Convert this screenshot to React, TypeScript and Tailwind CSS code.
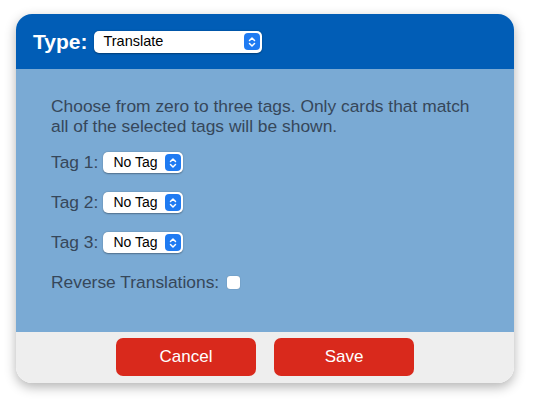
const Stepper = () => (
  <span className="flex h-[17px] w-[16px] items-center justify-center rounded-[4px] bg-[#1f7bf2]">
    <svg width="8" height="12" viewBox="0 0 8 12" fill="none" stroke="white" strokeWidth="1.5" strokeLinecap="round" strokeLinejoin="round">
      <path d="M1.5 4.5 L4 2 L6.5 4.5" />
      <path d="M1.5 7.5 L4 10 L6.5 7.5" />
    </svg>
  </span>
);

const FakeSelect = ({ value, className }: { value: string; className: string }) => (
  <div className={`flex items-center justify-between rounded-[5px] bg-white pl-[9px] pr-[2px] text-black shadow-[0_0.5px_1.5px_rgba(0,0,0,0.35)] ${className}`}>
    <span>{value}</span>
    <Stepper />
  </div>
);

export default function App() {
  const tags = ['Tag 1:', 'Tag 2:', 'Tag 3:'];
  return (
    <div className="h-[400px] w-[533px] bg-white pl-4 pt-[14px] font-['Liberation_Sans',Arial,sans-serif]">
      <div className="flex h-[369px] w-[498px] flex-col overflow-hidden rounded-[16px] shadow-[0_4px_12px_rgba(0,0,0,0.3)]">
        {/* Header */}
        <div className="flex h-[55px] items-center gap-[7px] bg-[#015db6] pl-[17px]">
          <span className="text-[21px] font-bold text-white">Type:</span>
          <FakeSelect value="Translate" className="h-[22px] w-[168px] text-[14.5px]" />
        </div>

        {/* Body */}
        <div className="flex flex-1 flex-col bg-[#7aaad4] px-[35px] pt-[27px] text-[17.4px] text-[#36475a]">
          <p className="leading-[20px]">
            Choose from zero to three tags. Only cards that match all of the selected tags will be shown.
          </p>
          <div className="mt-[16px] flex flex-col gap-[19px]">
            {tags.map((t) => (
              <div key={t} className="flex h-[21px] items-center gap-[5px]">
                <span>{t}</span>
                <FakeSelect value="No Tag" className="h-[21px] w-[80px] pl-[10px] text-[14px]" />
              </div>
            ))}
            <div className="flex h-[21px] items-center gap-[8px]">
              <span>Reverse Translations:</span>
              <span className="h-[13px] w-[13px] rounded-[3px] bg-white shadow-[0_0_1px_rgba(0,0,0,0.4)]" />
            </div>
          </div>
        </div>

        {/* Footer */}
        <div className="flex h-[51px] items-start justify-center gap-[18px] bg-[#eeeeee] pt-[6px]">
          <button className="h-[38px] w-[140px] rounded-[7px] bg-[#d9291c] text-[17px] text-white">Cancel</button>
          <button className="h-[38px] w-[140px] rounded-[7px] bg-[#d9291c] text-[17px] text-white">Save</button>
        </div>
      </div>
    </div>
  );
}
